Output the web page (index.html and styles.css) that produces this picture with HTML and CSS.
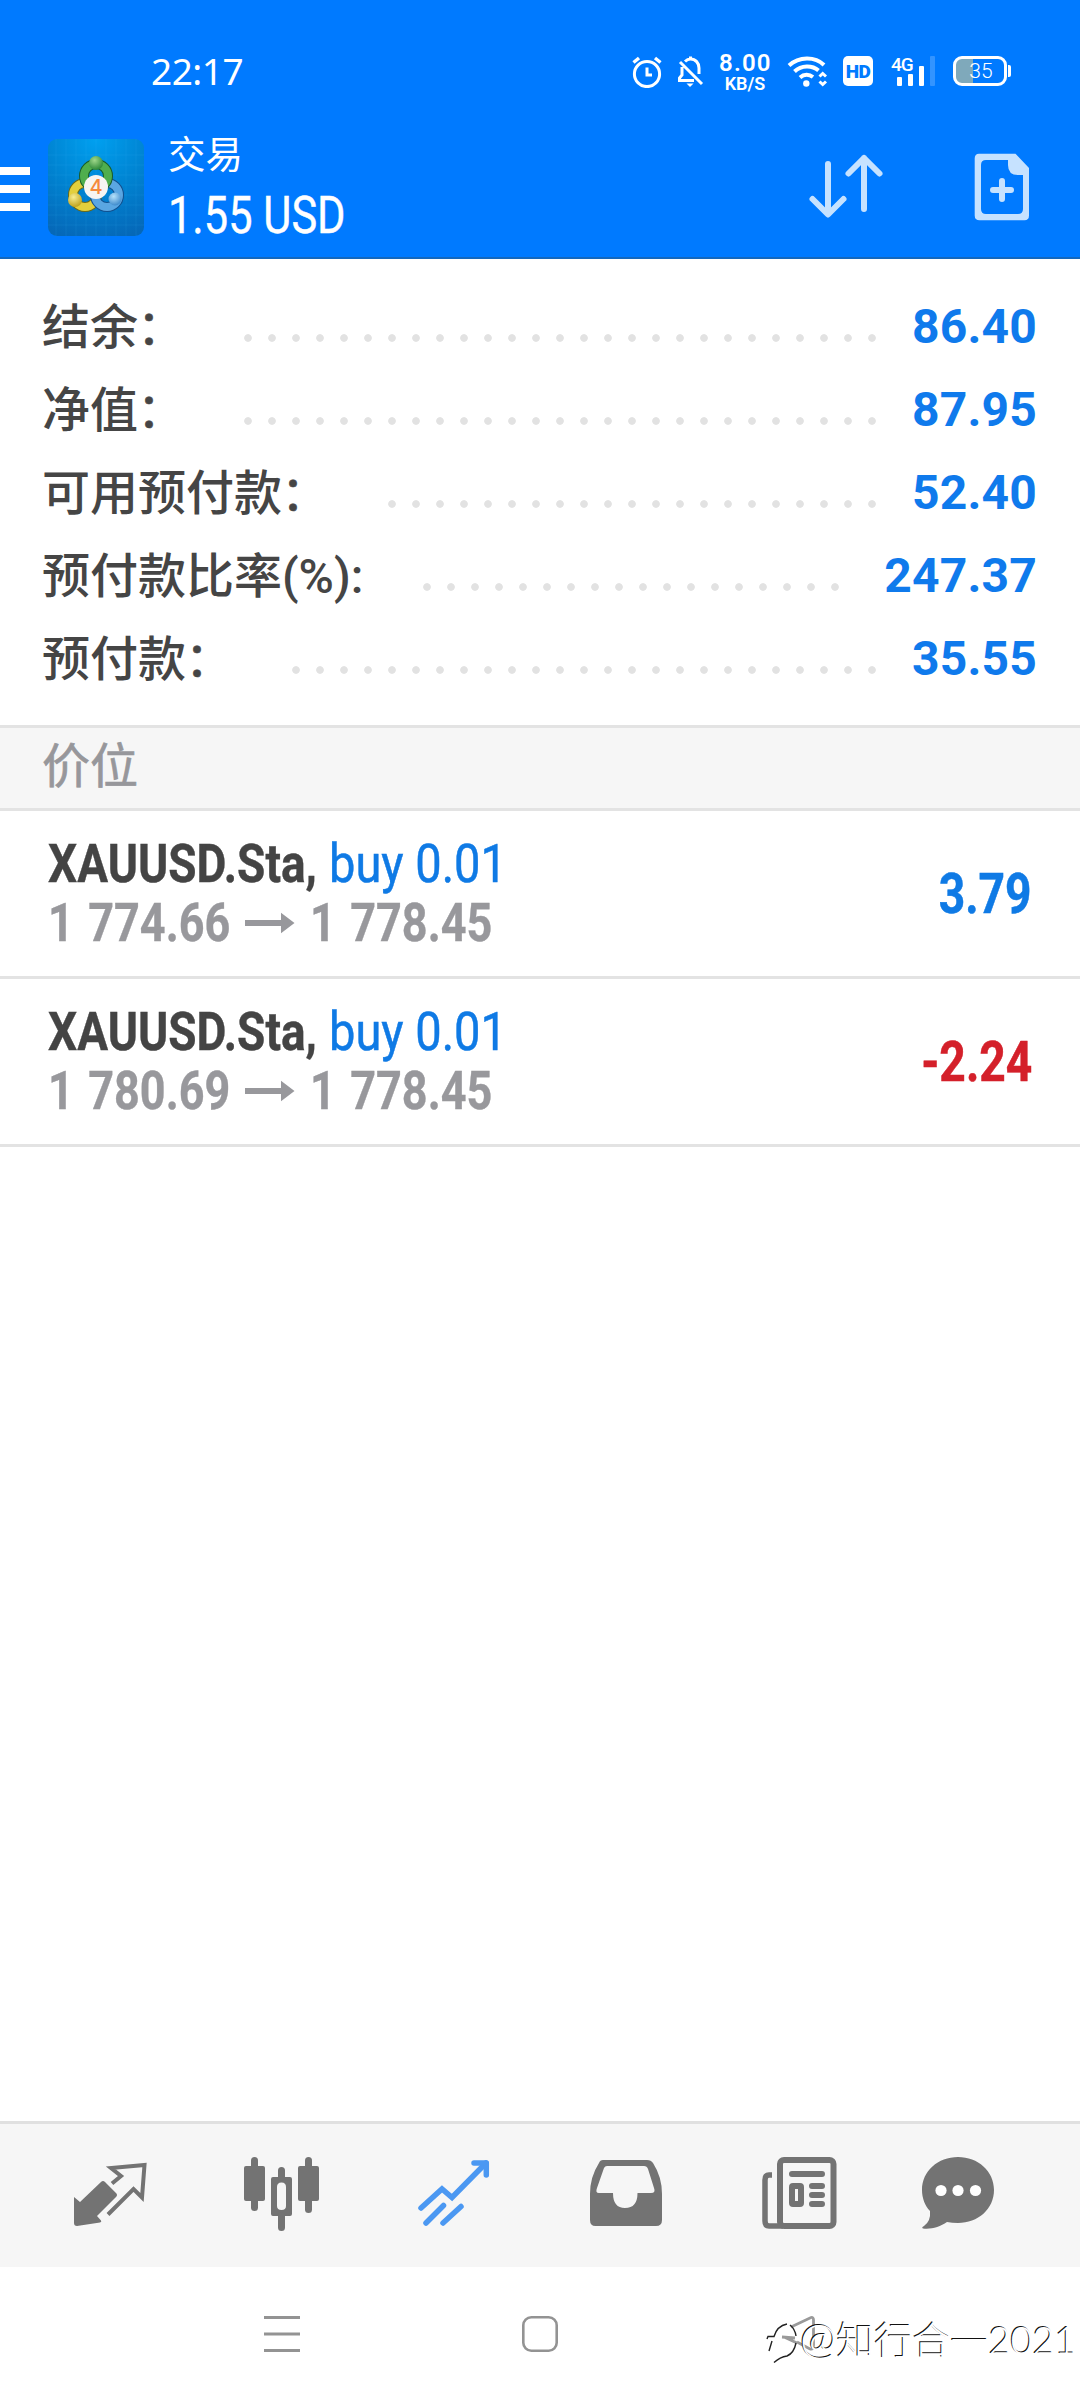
FILE: index.html
```html
<!DOCTYPE html>
<html lang="zh-CN">
<head>
<meta charset="utf-8">
<title>交易</title>
<link rel="stylesheet" href="styles.css">
</head>
<body>
<header class="header">
  <div class="status">
    <div class="clock">22:17</div>
    <div class="indicators">
      <svg class="ic-alarm" width="30" height="32" viewBox="0 0 30 32" fill="none" stroke="#fff"><circle cx="15" cy="18" r="12.6" stroke-width="3"/><path d="M15 11.500V19H20" stroke-width="3"/><path d="M1.500 6.500L7 2M28.500 6.500L23 2" stroke-width="3.400"/></svg>
      <svg class="ic-bell" width="27" height="32" viewBox="0 0 27 32" fill="none" stroke="#fff" stroke-width="3"><path d="M8 5.500C10 3.500 12 3 13.500 3C18.500 3 22 7 22 12V18M5 11V19L2.500 22V24.500H17M3 6L25 28M13.500 4V.5"/><path d="M9.500 27.500H16.500L13 31Z" fill="#fff" stroke="none"/></svg>
      <div class="speed"><div class="speed-num">8.00</div><div class="speed-unit">KB/S</div></div>
      <svg class="ic-wifi" width="42" height="32" viewBox="0 0 42 32" fill="none" stroke="#fff" stroke-width="4"><path d="M2 9.500C12 .3 28 .3 37 9"/><path d="M7.500 15.500C14.500 9 25 9 31.500 14.500"/><path d="M13 21.500C17 18 22 18 26 21" /><circle cx="19.300" cy="27.500" r="3.200" fill="#fff" stroke="none"/><path d="M32.500 20.500L35.700 17.500L39 20.500M32.500 25.500L35.700 28.500L39 25.500" stroke-width="3"/></svg>
      <div class="hd">HD</div>
      <div class="signal"><span class="net">4G</span><i class="b1"></i><i class="b2"></i><i class="b3"></i><i class="b4"></i></div>
      <div class="battery"><span>35</span></div>
      <i class="battery-tip"></i>
    </div>
  </div>
  <div class="appbar">
    <div class="menu"><i></i><i></i><i></i></div>
    <svg class="logo" width="96" height="97" viewBox="0 0 96 97">
      <defs>
        <radialGradient id="bg" cx=".5" cy="0" r="1.050"><stop offset="0" stop-color="#00a0f0"/><stop offset=".5" stop-color="#0084d2"/><stop offset="1" stop-color="#0568b8"/></radialGradient>
        <radialGradient id="gr" cx=".4" cy=".3" r=".8"><stop offset="0" stop-color="#9fd88a"/><stop offset="1" stop-color="#1d7d2c"/></radialGradient>
        <radialGradient id="ye" cx=".4" cy=".3" r=".8"><stop offset="0" stop-color="#f8ee90"/><stop offset="1" stop-color="#b8980f"/></radialGradient>
        <radialGradient id="bl" cx=".4" cy=".3" r=".8"><stop offset="0" stop-color="#b5e2fb"/><stop offset="1" stop-color="#2f7fc6"/></radialGradient>
      </defs>
      <rect width="96" height="97" rx="9" fill="url(#bg)"/>
      <path d="M8 0V97M18 0V97M28 0V97M38 0V97M48 0V97M58 0V97M68 0V97M78 0V97M88 0V97M0 16H96M0 26H96M0 36H96M0 46H96M0 56H96M0 66H96M0 76H96M0 86H96" stroke="#4cc0f5" stroke-opacity=".12"/>
      <g fill="none">
        <circle cx="37" cy="56" r="12" stroke="#6b6a18" stroke-width="10"/><circle cx="37" cy="56" r="12" stroke="#e3cf3c" stroke-width="8"/>
        <circle cx="59" cy="56" r="12" stroke="#12508e" stroke-width="10"/><circle cx="59" cy="56" r="12" stroke="#5aa6e2" stroke-width="8"/>
        <circle cx="48" cy="37" r="12" stroke="#1a5c28" stroke-width="10"/><circle cx="48" cy="37" r="12" stroke="#4fae4d" stroke-width="8"/>
      </g>
      <circle cx="48" cy="24" r="7" fill="url(#gr)"/><circle cx="27" cy="61" r="7" fill="url(#ye)"/><circle cx="67" cy="60" r="6.500" fill="url(#bl)"/>
      <circle cx="48" cy="48" r="12" fill="#f7f5f2"/>
      <text x="48" y="55" text-anchor="middle" font-family="Inter" font-size="20" font-weight="500" fill="#f58a3c">4</text>
    </svg>
    <div class="titles"><div class="title">交易</div><div class="sum"><span>1.55 USD</span></div></div>
    <svg class="ic-sort" width="76" height="66" viewBox="808 153 76 66" fill="none" stroke="#c6e2ff" stroke-width="6" stroke-linecap="round" stroke-linejoin="round"><path d="M828 164V214M812.500 199L828 214.500L843.500 199M864 209V158M848.500 173.500L864 158L879.500 173.500"/></svg>
    <svg class="ic-new" width="56" height="68" viewBox="974 153 56 68"><path fill="#c6e2ff" fill-rule="evenodd" d="M979 153.700H1015.500L1029 168V215.500Q1029 220.300 1024.500 220.300H979.500Q974.700 220.300 974.700 215.500V158.500Q974.700 153.700 979 153.700ZM986 160Q981 160 981 165V209Q981 214 986 214H1018Q1023 214 1023 209V175H1018Q1008 175 1008 165V160Z"/><path d="M993 190H1011M1002 181V199" stroke="#c6e2ff" stroke-width="6" stroke-linecap="round"/></svg>
  </div>
</header>
<main class="content">
  <section class="account">
    <div class="row"><span class="label">结余<span class="colon">：</span></span><i class="dots d27"></i><span class="value">86.40</span></div>
    <div class="row"><span class="label">净值<span class="colon">：</span></span><i class="dots d27"></i><span class="value">87.95</span></div>
    <div class="row"><span class="label">可用预付款<span class="colon">：</span></span><i class="dots d21"></i><span class="value">52.40</span></div>
    <div class="row"><span class="label">预付款比率(%):</span><i class="dots d18"></i><span class="value">247.37</span></div>
    <div class="row"><span class="label">预付款<span class="colon">：</span></span><i class="dots d25"></i><span class="value">35.55</span></div>
  </section>
  <h2 class="section">价位</h2>
  <section class="positions">
    <article class="pos">
      <div class="info">
        <div class="line"><b class="sym">XAUUSD.Sta,</b><span class="side">buy 0.01</span></div>
        <div class="line prices"><b class="price">1 774.66</b><svg class="arrow" width="50" height="22" viewBox="0 0 50 22" fill="#98989c"><path d="M0 8H36V.8L49.500 11L36 21.200V14H0Z"/></svg><b class="price">1 778.45</b></div>
      </div>
      <b class="profit">3.79</b>
    </article>
    <article class="pos">
      <div class="info">
        <div class="line"><b class="sym">XAUUSD.Sta,</b><span class="side">buy 0.01</span></div>
        <div class="line prices"><b class="price">1 780.69</b><svg class="arrow" width="50" height="22" viewBox="0 0 50 22" fill="#98989c"><path d="M0 8H36V.8L49.500 11L36 21.200V14H0Z"/></svg><b class="price">1 778.45</b></div>
      </div>
      <b class="profit loss">-2.24</b>
    </article>
  </section>
</main>
<nav class="tabs">
  <svg width="100" height="90" viewBox="60 2147 100 90" fill="#737373"><path d="M74 2197L80 2202L101 2182Q103 2180 105 2182L116 2193Q118 2195 116 2197L97 2216L101 2220.500Q102 2222 100 2222.500L77 2226Q74 2226 74 2223Z"/><path d="M112 2183.500L121 2176L111 2168L144.500 2165L142 2197.500L133.500 2189L108 2214.500" fill="none" stroke="#737373" stroke-width="4"/></svg>
  <svg width="100" height="90" viewBox="231 2147 100 90" fill="#737373"><rect x="244" y="2166" width="21" height="35" rx="2"/><rect x="251" y="2157" width="7" height="54" rx="3.500"/><rect x="298" y="2166" width="21" height="35" rx="2"/><rect x="305" y="2157" width="7" height="56" rx="3.500"/><path fill-rule="evenodd" d="M273 2177H290Q292 2177 292 2179V2214Q292 2216 290 2216H273Q271 2216 271 2214V2179Q271 2177 273 2177ZM281.500 2182.500Q277 2182.500 277 2187V2206Q277 2210 281.500 2210Q286 2210 286 2206V2187Q286 2182.500 281.500 2182.500Z"/><path d="M281.500 2170.500V2177M281.500 2216V2227.500" stroke="#737373" stroke-width="7" stroke-linecap="round"/></svg>
  <svg width="100" height="90" viewBox="403 2147 100 90" fill="none" stroke="#4b98f2" stroke-width="5.500" stroke-linecap="round"><path d="M421 2208L442 2189L452 2197.500L486 2163" stroke-linejoin="miter"/><path d="M474 2163H486.300V2175" stroke-linejoin="round"/><path d="M426 2223L443.500 2205.500M443 2223L461 2206.500"/></svg>
  <svg width="100" height="90" viewBox="577 2147 100 90"><path fill="#737373" fill-rule="evenodd" d="M604 2160H648Q652 2160 654 2163Q663 2177 663 2194V2220Q663 2226 657 2226H596.500Q591 2226 591 2220V2194Q591 2177 600 2163Q601 2160 604 2160ZM608 2166Q606 2166 605 2168L598 2188Q596 2193 600 2193H614Q614 2208 626 2208Q638.500 2208 638.500 2193H652Q657 2193 655 2188L649 2169Q648 2166 645 2166Z"/></svg>
  <svg width="100" height="90" viewBox="749 2147 100 90" fill="none" stroke="#737373" stroke-width="6"><rect x="781" y="2160" width="53.500" height="66" rx="4"/><path d="M773 2175H770Q766 2175 766 2180V2221Q766 2226 770 2226H784" stroke-width="5.500"/><path d="M793 2174H823M813 2186H823M813 2195H823M813 2204H823" stroke-linecap="round"/><rect x="793" y="2186" width="9" height="18" rx="1"/></svg>
  <svg width="100" height="90" viewBox="908 2147 100 90" fill="#737373"><path d="M958 2157C978 2157 994 2171 994 2190C994 2209 978 2223 958 2223Q952 2223 947 2222C940 2227 931 2229.500 923 2228.500Q921 2227.500 924 2226Q931 2221 930 2211C925 2206 922 2198 922 2190C922 2171 938 2157 958 2157Z"/><g fill="#fff"><circle cx="941" cy="2190.500" r="5.600"/><circle cx="958" cy="2190.500" r="5.600"/><circle cx="975.500" cy="2190.500" r="5.600"/></g></svg>
</nav>
<footer class="sysnav">
  <svg class="recent" width="36" height="36" viewBox="0 0 36 36" stroke="#939393" stroke-width="3"><path d="M0 1.500H36M0 18H36M0 34.500H36"/></svg>
  <svg class="home" width="36" height="36" viewBox="0 0 36 36" fill="none" stroke="#939393" stroke-width="2.600"><rect x="1.300" y="1.300" width="33.400" height="33.400" rx="8"/></svg>
  <svg class="back" width="52" height="54" viewBox="764 2312 52 54" fill="none" stroke="#9a9a9a" stroke-width="2.800"><path d="M791 2327L811 2317.500Q813.500 2317 813.500 2320V2345Q813.500 2350 810 2349L797 2342M782 2337L795 2338M784 2337L797 2343"/><g stroke="#222" stroke-width="1.400"><path d="M767 2339L768 2336.500H774Q777 2326 787 2324M790 2325Q795 2329 796 2336M796 2343Q794 2353 787 2356Q780 2357 774 2362.500M769 2351L772 2341"/></g></svg>
  <span class="watermark"><span class="at">@</span>知行合一2021</span>
</footer>
</body>
</html>
```
FILE: styles.css
```css
* { box-sizing: border-box; }
body { margin: 0; width: 1080px; height: 2400px; background: #fff; display: flex; flex-direction: column; overflow: hidden; font-family: Roboto, "Noto Sans CJK SC", sans-serif; }
svg { display: block; flex: none; }
i { display: block; flex: none; }

.header { height: 259px; background: #007aff; border-bottom: 2px solid #1468bd; color: #fff; display: flex; flex-direction: column; flex: none; }
.status { height: 128px; display: flex; align-items: flex-start; justify-content: space-between; padding: 45px 69px 0 151px; }
.clock { font: 37px/52px "Noto Sans", sans-serif; letter-spacing: -.5px; }
.indicators { display: flex; padding-top: 11px; }
.ic-bell { margin-left: 15px; }
.speed { margin: -6px 0 0 15px; width: 52px; text-align: center; font-weight: 600; }
.speed-num { font-size: 24px; line-height: 27px; letter-spacing: 1.2px; }
.speed-unit { font-size: 18px; line-height: 18px; margin-top: -2px; }
.ic-wifi { margin-left: 16px; }
.hd { margin: 0 0 0 14px; width: 30px; height: 30px; border-radius: 5px; background: #fff; color: #007aff; font: 900 19px/31px Roboto, sans-serif; letter-spacing: -.5px; text-align: center; }
.signal { position: relative; margin-left: 18px; width: 44px; height: 30px; display: flex; gap: 6px; align-items: flex-end; padding-left: 6px; }
.signal i { width: 5px; background: #fff; border-radius: 1px; }
.net { position: absolute; left: 0; top: 0; font: 500 19px/17px Roboto, sans-serif; letter-spacing: -1px; }
.signal .b1 { height: 9px; }
.signal .b2 { height: 12px; }
.signal .b3 { height: 20px; }
.signal .b4 { height: 30px; background: #3394ff; }
.battery { margin: 0 0 0 18px; width: 54px; height: 30px; border: 3px solid #fff; border-radius: 9px; background: linear-gradient(90deg, #7fa9bb 17px, transparent 17px); font: 300 21px/24px Roboto, sans-serif; text-align: center; padding-left: 2px; }
.battery-tip { width: 3px; height: 12px; background: #fff; border-radius: 0 2px 2px 0; margin: 9px 0 0 1px; }

.appbar { flex: 1; display: flex; align-items: flex-start; }
.menu { width: 30px; margin-top: 39px; display: flex; flex-direction: column; gap: 10px; }
.menu i { height: 8px; background: #fff; }
.logo { margin: 11px 0 0 18px; }
.titles { margin-left: 24px; flex: 1; }
.title { font-size: 37.500px; line-height: 54px; }
.sum { font-size: 51px; line-height: 60px; margin-top: 4px; }
.sum span { display: inline-block; transform-origin: 0 50%; transform: scaleX(.85); -webkit-text-stroke: .4px #fff; }
.ic-sort { margin-top: 25px; }
.ic-new { margin: 25px 50px 0 90px; }

.content { flex: 1; }
.account { height: 466px; padding: 26px 43px 0 42px; }
.row { height: 83px; display: flex; align-items: center; }
.label { font-size: 48px; line-height: 83px; font-weight: 500; color: #454545; white-space: nowrap; padding-top: 1px; }
.colon { font-weight: 400; display: inline-block; transform: translateX(-1px); -webkit-text-stroke: .6px #454545; }
.dots { height: 8px; margin: 22px 0 0 50px; background: radial-gradient(circle at 12px 4px, #e2e2e2 3.400px, transparent 4.200px) 0 0 / 24px 8px; }
.d27 { width: 648px; }
.d25 { width: 600px; }
.d21 { width: 504px; }
.d18 { width: 432px; margin-left: 52px; }
.value { margin-left: auto; font-size: 48px; font-weight: 700; color: #0f7aec; letter-spacing: .2px; }

.section { margin: 0; height: 86px; padding-left: 42px; border-top: 3px solid #e3e3e3; border-bottom: 3px solid #e3e3e3; background: #f6f6f6; color: #97979b; font-size: 48px; line-height: 77px; font-weight: 400; -webkit-text-stroke: .7px #97979b; }
.pos { height: 168px; border-bottom: 3px solid #e3e3e3; display: flex; justify-content: space-between; align-items: center; padding: 0 48px; }
.line { height: 59px; line-height: 59px; font-size: 54.500px; display: flex; align-items: center; white-space: nowrap; }
.info { margin-top: -1px; }
.line b, .side { transform-origin: 0 50%; }
.sym { color: #444; width: 281px; transform: scaleX(.843); -webkit-text-stroke: .4px #444; }
.side { color: #0f7ae5; transform: scaleX(.863); -webkit-text-stroke: .5px #0f7ae5; }
.price { color: #98989c; width: 180px; transform: scaleX(.825); word-spacing: 4px; -webkit-text-stroke: .4px #98989c; }
.arrow { margin: 0 15px 0 17px; }
.profit { font-size: 55px; color: #0f7ae5; transform: scaleX(.84); transform-origin: 100% 50%; -webkit-text-stroke: .5px currentColor; }
.loss { color: #d4202a; }

.tabs { flex: none; height: 146px; border-top: 3px solid #e0e0e0; background: #f6f6f6; display: flex; padding: 23px 0 0 60px; }
.tabs svg + svg { margin-left: 71px; }
.tabs svg + svg + svg { margin-left: 72px; }
.tabs svg + svg + svg + svg { margin-left: 73px; }
.tabs svg + svg + svg + svg + svg { margin-left: 72px; }
.tabs svg:last-child { margin-left: 60px !important; }

.sysnav { flex: none; height: 133px; display: flex; padding: 49px 0 0 264px; }
.home { margin-left: 222px; }
.back { margin: -4px 0 0 206px; }
.watermark { margin: -9px 0 0 -16px; font: 300 38px/60px Lato, "Noto Sans CJK SC", sans-serif; color: #fff; text-shadow: -1px -1px 0 #111; white-space: nowrap; z-index: 1; }
.at { font-size: 44px; }
```
